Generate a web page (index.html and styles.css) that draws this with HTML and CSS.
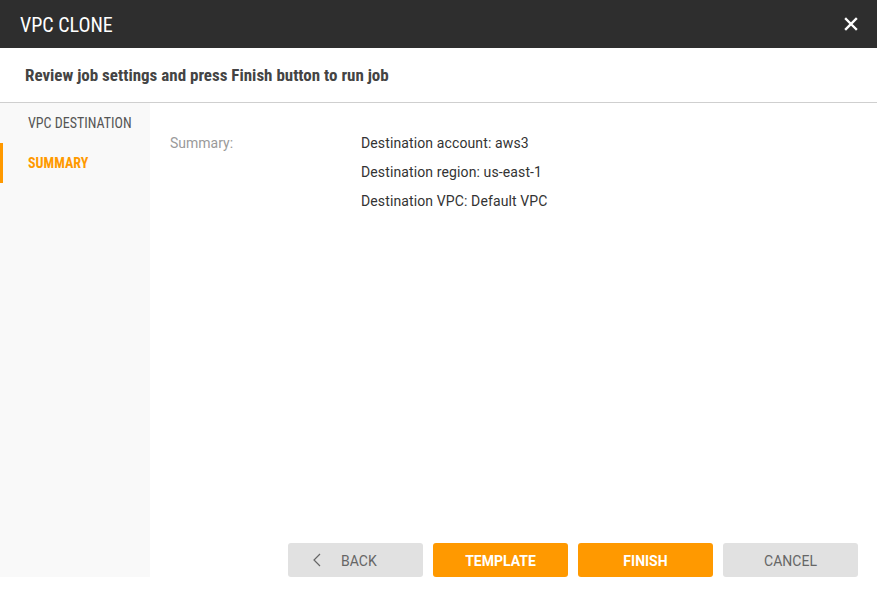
FILE: index.html
```html
<!DOCTYPE html>
<html>
<head>
<meta charset="utf-8">
<link rel="stylesheet" href="styles.css">
</head>
<body>
<div class="dialog">
  <div class="header">
    <div class="title">VPC CLONE</div>
    <button class="close" aria-label="Close">
      <svg width="14" height="14" viewBox="0 0 14 14"><path d="M2 2 L12 12 M12 2 L2 12" stroke="#fff" stroke-width="2.4" stroke-linecap="square"/></svg>
    </button>
  </div>
  <div class="subheader">Review job settings and press Finish button to run job</div>
  <div class="main">
    <nav class="sidebar">
      <div class="step">VPC DESTINATION</div>
      <div class="step active">SUMMARY</div>
    </nav>
    <div class="content">
      <div class="summary">
        <div class="label">Summary:</div>
        <div class="values">
          <div class="value">Destination account: aws3</div>
          <div class="value">Destination region: us-east-1</div>
          <div class="value">Destination VPC: Default VPC</div>
        </div>
      </div>
      <div class="footer">
        <button class="btn gray back">
          <svg class="chev" width="8" height="14" viewBox="0 0 8 14"><path d="M7 1 L1 7 L7 13" fill="none" stroke="#666" stroke-width="1.2"/></svg>
          <span>BACK</span>
        </button>
        <button class="btn orange">TEMPLATE</button>
        <button class="btn orange">FINISH</button>
        <button class="btn gray">CANCEL</button>
      </div>
    </div>
  </div>
</div>
</body>
</html>
```

FILE: styles.css
```css
* { box-sizing: border-box; }
html, body { margin: 0; padding: 0; background: #fff; }
body { font-family: Roboto, "Liberation Sans", sans-serif; width: 877px; height: 597px; overflow: hidden; }

.header {
  height: 48px;
  background: #2e2e2e;
  display: flex;
  align-items: center;
  justify-content: space-between;
  padding: 0 19px 0 20px;
}
.title {
  color: #fff;
  font-size: 20px;
  font-family: "Roboto Condensed", Roboto, sans-serif;
  font-stretch: condensed;
  padding-top: 1px;
}
.close {
  background: none;
  border: 0;
  padding: 0;
  width: 14px;
  height: 14px;
  display: flex;
  cursor: pointer;
}

.subheader {
  height: 55px;
  border-bottom: 1px solid #cfcfcf;
  display: flex;
  align-items: center;
  padding-left: 25px;
  font-family: "Roboto Condensed", Roboto, sans-serif;
  font-stretch: condensed;
  font-weight: 700;
  font-size: 17px;
  color: #444;
}

.main {
  display: flex;
  height: 474px;
}
.sidebar {
  width: 150px;
  background: #f9f9f9;
}
.step {
  height: 40px;
  display: flex;
  align-items: center;
  font-size: 14px;
  color: #555;
  font-family: "Roboto Condensed", Roboto, sans-serif;
  font-stretch: condensed;
  border-left: 3px solid transparent;
  padding-left: 25px;
}
.step.active {
  color: #ff9900;
  font-weight: 700;
  border-left-color: #ff9900;
}

.content {
  flex: 1;
  display: flex;
  flex-direction: column;
  justify-content: space-between;
  padding: 32px 19px 0 20px;
}
.summary {
  display: flex;
  font-size: 14px;
}
.label {
  width: 191px;
  color: #9a9a9a;
}
.values { color: #333; letter-spacing: 0.12px; }
.value { height: 29px; }

.footer {
  display: flex;
  justify-content: flex-end;
  gap: 10px;
}
.btn {
  width: 135px;
  height: 34px;
  border: 0;
  border-radius: 3px;
  font-family: Roboto, sans-serif;
  font-size: 14px;
  display: flex;
  align-items: center;
  justify-content: center;
  padding-top: 2px;
  cursor: pointer;
}
.btn.gray { background: #e1e1e1; color: #666; }
.btn.orange { background: #ff9900; color: #fff; font-weight: 700; }
.btn.back { justify-content: flex-start; padding-left: 25px; }
.btn.back .chev { margin-right: 20px; margin-top: -2px; }
```
